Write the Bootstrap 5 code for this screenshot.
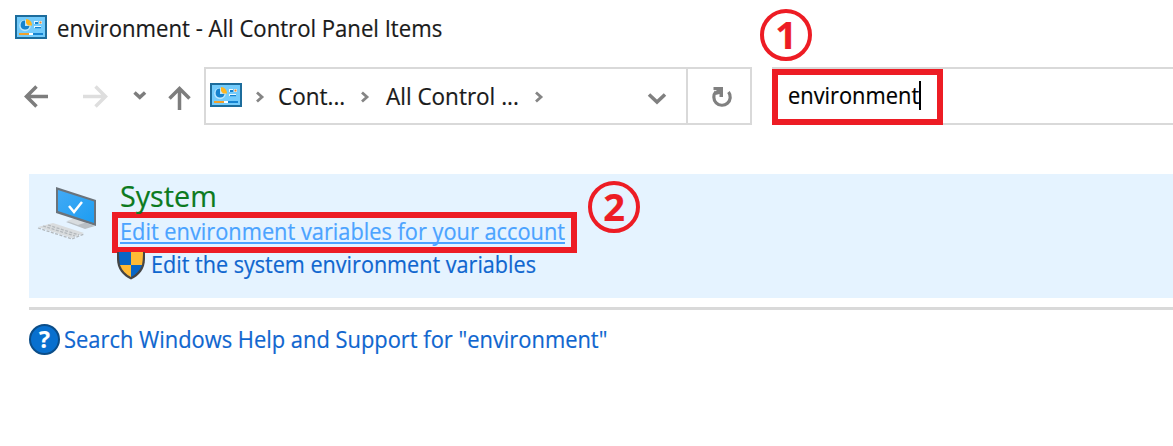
<!DOCTYPE html>
<html lang="en">
<head>
<meta charset="utf-8">
<title>environment - All Control Panel Items</title>
<link href="https://cdn.jsdelivr.net/npm/bootstrap@5.3.0/dist/css/bootstrap.min.css" rel="stylesheet">
<style>
  body { font-family: "Open Sans", "Noto Sans", sans-serif; font-size: 23.5px; line-height: 30px; color: #1a1a1a; background: #fff; overflow: hidden; -webkit-text-stroke: .2px; }
  svg { display: block; flex: none; }
  .fit { display: block; white-space: nowrap; flex: none; }
  .titlebar { height: 67px; padding: 13px 0 0 15px; }
  .toolbar { height: 58px; }
  .nav-buttons { width: 204px; }
  .address { width: 548px; border: 2px solid #d9d9d9; }
  .refresh { width: 64px; border-left: 2px solid #d9d9d9; }
  .search { margin-left: 20px; border: 2px solid #d9d9d9; border-width: 2px 0; }
  .search-mark { width: 171px; height: 56px; border: 6px solid #ed1c24; padding-left: 10px; }
  .search-mark .fit { margin-top: -4px; }
  .caret { width: 2px; height: 29px; background: #000; margin-top: -4px; }
  .results { margin: 49px 0 0 29px; height: 124px; background: #e5f3ff; }
  .system-title { font-size: 29px; line-height: 36px; color: #0b7a20; }
  .link-mark { width: 465px; height: 41px; border: 6px solid #ed1c24; }
  .hot { color: #4ba3ff; border-bottom: 2px solid #4ba3ff; height: 26px; line-height: 27px; }
  .task { color: #0f66cf; }
  .step { position: absolute; width: 52px; height: 52px; border: 4px solid #ed1c24; border-radius: 50%; color: #ed1c24; font: bold 38px/43px "Noto Sans", sans-serif; text-align: center; }
  .help { width: 31px; height: 31px; border-radius: 50%; border: 2px solid #0b4d88; background: #0870cf; color: #fff; font-size: 23px; font-weight: 700; line-height: 27px; text-align: center; }
  .rule { margin: 9px 0 0 29px; height: 3px; background: #d9d9d9; }
</style>
</head>
<body class="position-relative">
<svg width="0" height="0" class="position-absolute">
  <defs>
    <linearGradient id="screen" x2="1" y2="1"><stop stop-color="#42aaf5"/><stop offset="1" stop-color="#1d9df2"/></linearGradient>
    <symbol id="panel" viewBox="0 0 32 24">
      <path fill="#1c6c9c" d="M0 0h32v24H0z"/><path fill="#73cbfb" d="M2 2h28v20H2z"/>
      <circle cx="10" cy="10.500" r="5.800" fill="#b9e6ff"/><path fill="#1683cf" d="M10 5.500a4.500 4.500 0 1 0 4.500 5.500H10z"/>
      <path fill="#ffb51f" d="M11 4a6 6 0 0 1 6 6.500h-4L11 8z"/>
      <path fill="#e9f8ff" d="M19 6h4v3h-4zM24 6h3v3h-3zM19 11h7v2h-7z"/><path fill="#1683cf" d="M20 7h3v2h-3zM20 12h6v1.200h-6z"/><path fill="#e8842b" d="M24.500 6.500h2v2h-2z"/>
      <path fill="#f0a12c" d="M4 18h10v2H4z"/><path fill="#fff" d="M14 18h4v2h-4z"/><path fill="#1784d1" d="M18 18h10v2H18z"/>
    </symbol>
    <symbol id="chev" viewBox="0 0 10 12"><path d="M2 1.500 7 6 2 10.500" fill="none" stroke="#858585" stroke-width="2.800"/></symbol>
  </defs>
</svg>

<header class="titlebar d-flex align-items-start">
  <svg width="32" height="24" style="margin-top:2px"><use href="#panel"/></svg>
  <span class="fit" id="t1" style="margin-left:10px"><span>environment - All Control Panel Items</span></span>
</header>

<div class="toolbar d-flex">
  <div class="nav-buttons">
    <svg width="204" height="58" fill="none" stroke="#7d7d7d" stroke-width="3.500">
      <path d="M48 29.500H27M36.500 19.500 26.500 29.500l10 10"/>
      <path stroke="#dedede" d="M83 29.500h22M95.500 19.500l10 10-10 10"/>
      <path d="M134.500 25.500l5.300 4.800 5.300-4.800"/>
      <path d="M179.500 43V22M169.500 31.500l10-10 10 10"/>
    </svg>
  </div>
  <div class="address d-flex">
    <div class="d-flex align-items-center flex-grow-1">
      <svg width="32" height="24" style="margin-left:4px;margin-top:-3px"><use href="#panel"/></svg>
      <svg width="10" height="12" style="margin-left:13px;margin-top:2px"><use href="#chev"/></svg>
      <span class="fit" id="t2" style="margin-left:13px"><span>Cont...</span></span>
      <svg width="10" height="12" style="margin-left:15px;margin-top:2px"><use href="#chev"/></svg>
      <span class="fit" id="t3" style="margin-left:16px"><span>All Control ...</span></span>
      <svg width="10" height="12" style="margin-left:15px;margin-top:2px"><use href="#chev"/></svg>
      <svg width="20" height="14" class="ms-auto" style="margin-right:19px;margin-top:6px" viewBox="0 0 20 14"><path d="M2 2.500l8 7.500L18 2.500" fill="none" stroke="#808080" stroke-width="3.600"/></svg>
    </div>
    <div class="refresh">
      <svg width="62" height="54" viewBox="688 69 62 54" fill="none" stroke="#808080"><path stroke-width="3.200" d="M728.500 92A8.200 8.200 0 1 1 716 91.500"/><path fill="#808080" stroke="none" d="M713.500 87H723v10h-3.500v-3l-4 1v-4l1.500-1h-3.500z"/></svg>
    </div>
  </div>
  <div class="search flex-grow-1">
    <div class="search-mark d-flex align-items-center">
      <span class="fit" id="t4" style="color:#000"><span>environment</span></span><span class="caret"></span>
    </div>
  </div>
</div>

<main>
  <section class="results d-flex">
    <svg width="83" height="78" viewBox="29 174 83 78">
      <path fill="#b9bfc4" d="m66 222 9-3 20 7-10 3z"/><path fill="#d8dcdf" d="m67 221 8-3 12 4-9 3z"/>
      <path fill="#6b737b" d="m56 187 40 13v26l-40-13z"/><path fill="url(#screen)" d="m58 190 36 11.500v21.500l-36-12z"/>
      <path fill="none" stroke="#fff" stroke-width="2.500" d="m69 206 5 6 8-10"/>
      <path fill="#d9dcde" d="m38 227 15-4 31 10-12 5z"/>
      <path fill="none" stroke="#b3b8bc" stroke-width="1.300" stroke-dasharray="3 1.500" d="m38 228 34 11 12-5M43 226l32 10M48 225l31 10"/>
    </svg>
    <div>
      <div class="system-title" style="padding-left:8px;height:38px;padding-top:4px"><span class="fit" id="t5"><span>System</span></span></div>
      <div class="link-mark"><span class="fit hot" id="t6" style="margin-left:2px"><span>Edit environment variables for your account</span></span></div>
      <div class="d-flex task" style="padding-left:5px">
        <svg width="28" height="28" viewBox="0 0 28 28" style="margin-top:-1px"><path fill="#454545" d="M0 0h28v7c0 10-6 17-14 20.500C6 24 0 17 0 7z"/><path fill="#0866c6" d="M2 0h12v13H3Q2 8 2 0zM14 13h11q-3 8-11 12z"/><path fill="#ffba35" d="M14 0h12q0 8-1 13H14zM3 13h11v12Q6 21 3 13z"/></svg>
        <span class="fit" id="t7" style="margin:-4px 0 0 6px"><span>Edit the system environment variables</span></span>
      </div>
    </div>
  </section>
  <div class="rule"></div>
  <div class="d-flex task" style="padding:14px 0 0 29px">
    <span class="help">?</span>
    <span class="fit" id="t8" style="margin-left:4px"><span>Search Windows Help and Support for "environment"</span></span>
  </div>
</main>

<div class="step" style="left:760px;top:9px">1</div>
<div class="step" style="left:588px;top:181px">2</div>

<script src="https://cdn.jsdelivr.net/npm/bootstrap@5.3.0/dist/js/bootstrap.bundle.min.js"></script>
<script>
  const widths = { t1: 385, t2: 67, t3: 133, t4: 131, t5: 97, t6: 445, t7: 385, t8: 543 };
  for (const [id, w] of Object.entries(widths)) {
    const box = document.getElementById(id), label = box.firstElementChild;
    label.style.display = 'inline-block';
    label.style.transformOrigin = 'left';
    label.style.transform = `scaleX(${w / label.offsetWidth})`;
    box.style.width = w + 'px';
  }
</script>
</body>
</html>
